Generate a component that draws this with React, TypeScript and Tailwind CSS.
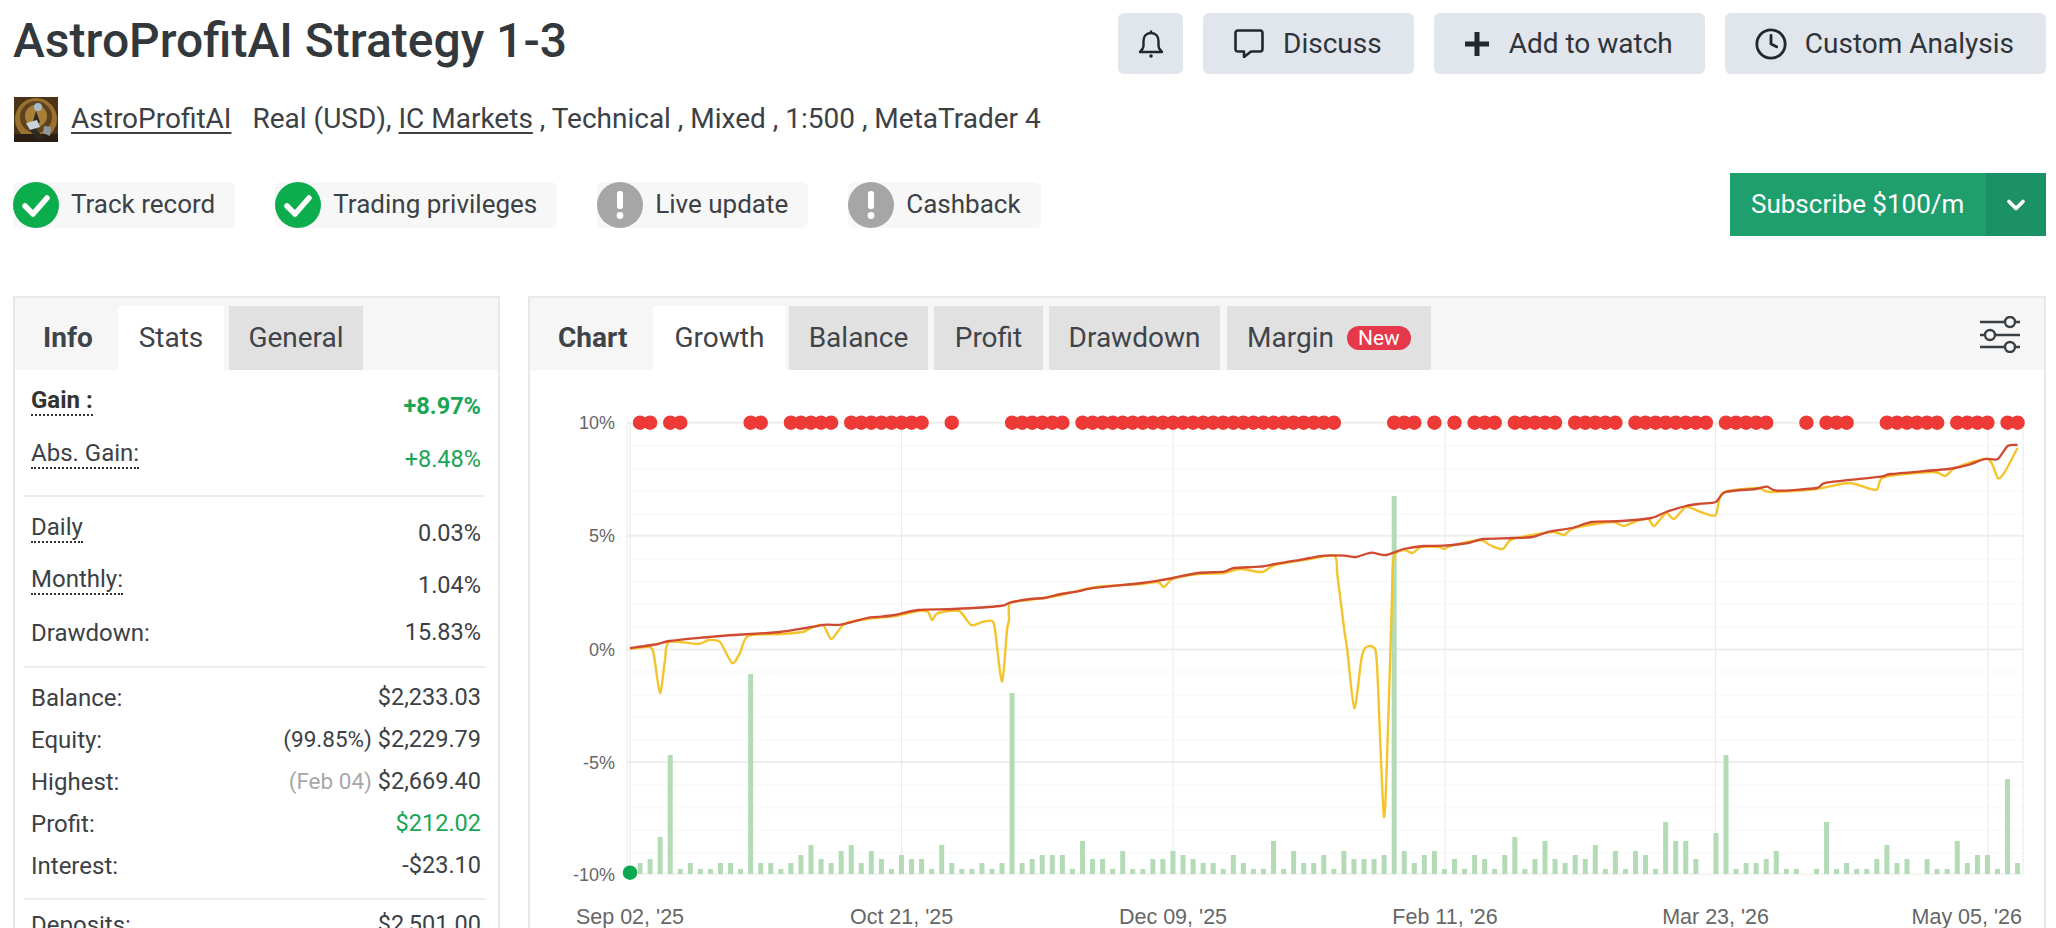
import React from "react";
import { Clock, ChevronDown } from "lucide-react";

type Pt = [number, number];

// catmull-rom through the points, the lines on the chart are smoothed
function smooth(pts: Pt[]) {
  let d = `M${pts[0][0]} ${pts[0][1]}`;
  for (let i = 0; i < pts.length - 1; i++) {
    const p0 = pts[Math.max(i - 1, 0)];
    const p1 = pts[i];
    const p2 = pts[i + 1];
    const p3 = pts[Math.min(i + 2, pts.length - 1)];
    const c1x = p1[0] + (p2[0] - p0[0]) / 8;
    const c1y = p1[1] + (p2[1] - p0[1]) / 8;
    const c2x = p2[0] - (p3[0] - p1[0]) / 8;
    const c2y = p2[1] - (p3[1] - p1[1]) / 8;
    d += ` C${c1x.toFixed(1)} ${c1y.toFixed(1)} ${c2x.toFixed(1)} ${c2y.toFixed(1)} ${p2[0]} ${p2[1]}`;
  }
  return d;
}

const slotX = (i: number) => 630 + i * 10.055;
const BASE = 874;
const RIGHT = 2023;

// bar heights by slot
const bars = [
  0, 11, 15, 37, 119, 5, 11, 5, 5, 11, 11, 5, 200, 11, 11, 5, 11, 19, 29, 15, 11, 23, 29, 11, 23, 15, 5, 19, 15, 15,
  5, 29, 11, 5, 5, 11, 5, 11, 181, 11, 15, 19, 19, 19, 5, 33, 15, 15, 5, 23, 5, 5, 15, 15, 23, 19, 15, 11, 11, 5, 19,
  11, 5, 5, 33, 5, 23, 11, 11, 19, 5, 23, 15, 15, 15, 19, 378, 23, 11, 19, 23, 5, 15, 5, 19, 15, 5, 19, 37, 5, 15, 33,
  15, 11, 19, 15, 29, 5, 23, 5, 23, 19, 5, 52, 33, 33, 15, 0, 41, 119, 5, 11, 11, 15, 23, 5, 5, 0, 5, 52, 5, 11, 5, 5,
  15, 29, 11, 15, 0, 15, 5, 5, 33, 11, 19, 19, 5, 95, 11,
];

const dotRuns: [number, number][] = [
  [1, 2], [4, 5], [12, 13], [16, 20], [22, 29], [32, 32], [38, 43], [45, 70], [76, 78], [80, 80], [82, 82], [84, 86],
  [88, 92], [94, 98], [100, 107], [109, 113], [117, 117], [119, 121], [125, 130], [132, 135], [137, 138],
];
const dots: number[] = [];
dotRuns.forEach(([a, b]) => {
  for (let i = a; i <= b; i++) dots.push(i);
});

// the right half was read off a crop with a slightly different scale
const fixX = (pts: Pt[]): Pt[] =>
  pts.map(([x, y]) => [x > 1280 ? +(1280 + (x - 1280) * 0.99).toFixed(1) : x, y] as Pt);

const redLine: Pt[] = fixX([
  [630, 648], [658, 644], [669, 641], [709, 637], [734, 635], [780, 632], [806, 628], [826, 624.7], [841, 624.7],
  [867, 618], [877, 617], [895, 615], [918, 610], [954, 609], [1000, 606], [1010, 602.7], [1030, 599], [1045, 598],
  [1061, 594], [1076, 591.7], [1096, 587.7], [1142, 583], [1158, 580.7], [1173, 578], [1198, 573], [1224, 571.7],
  [1234, 568], [1260, 566.7], [1275, 564], [1295, 560.7], [1310, 558], [1325, 555.7], [1345, 555.7], [1357, 557],
  [1372, 552.7], [1387, 555], [1405, 549], [1425, 546], [1445, 545.7], [1470, 543], [1485, 539], [1515, 538],
  [1535, 537], [1552, 531.7], [1575, 528], [1595, 522], [1625, 521], [1655, 518], [1670, 512], [1690, 506],
  [1705, 503.7], [1720, 502], [1730, 492], [1760, 489], [1772, 486.7], [1782, 490.7], [1822, 488], [1832, 482.7],
  [1887, 476.7], [1897, 474], [1955, 469], [1975, 465], [1992, 459], [2005, 459], [2015, 446], [2025, 445],
]);

const yellowLine: Pt[] = fixX([
  [630, 649], [650, 647], [654, 656], [660, 693], [665, 660], [669, 642], [698, 644], [709, 640], [720, 642],
  [732, 663], [740, 653], [748, 636], [780, 634], [803, 632], [811, 628], [823, 625], [831, 639], [839, 630], [846, 623],
  [867, 619], [895, 616], [918, 611], [928, 612], [932, 620], [938, 613], [959, 611], [971, 625], [982, 622], [992, 621],
  [995, 630], [1002, 682], [1007, 630], [1009, 620], [1010, 603], [1030, 600], [1061, 595], [1096, 587], [1142, 584],
  [1158, 582], [1164, 587], [1173, 579], [1198, 574], [1224, 573], [1240, 569], [1262, 572], [1275, 565], [1310, 559],
  [1335, 556], [1338, 575], [1345, 630], [1348, 650], [1355, 708], [1362, 660], [1366, 648], [1374, 647], [1378, 665],
  [1385, 817], [1390, 700], [1393, 600], [1395, 557],
  [1405, 550], [1414, 553], [1422, 547], [1440, 547], [1446, 549], [1452, 546], [1482, 540], [1492, 545], [1505, 549],
  [1515, 539], [1555, 532], [1567, 535], [1577, 528], [1615, 522], [1627, 526], [1640, 521], [1652, 519], [1658, 526],
  [1670, 513], [1678, 519], [1690, 507], [1705, 512], [1720, 515], [1727, 493], [1762, 488], [1770, 491], [1780, 492],
  [1822, 489], [1855, 483], [1882, 490], [1890, 477], [1940, 472], [1952, 476], [1962, 468], [1995, 459], [2005, 478],
  [2012, 472], [2025, 448],
]);

function Chart() {
  const hLines = [-10, -9, -8, -7, -6, -4, -3, -2, -1, 1, 2, 3, 4, 6, 7, 8, 9];
  return (
    <svg viewBox="530 370 1514 558" className="block w-[1514px] h-[558px]">
      {hLines.map((n) => {
        const y = 649.5 - n * 22.6;
        return <line key={n} x1={627} x2={RIGHT} y1={y} y2={y} stroke="#fafafa" strokeWidth={1.5} />;
      })}
      {[422.7, 535.7, 649.5, 762].map((y) => (
        <line key={y} x1={627} x2={RIGHT} y1={y} y2={y} stroke="#eeeeee" strokeWidth={2} />
      ))}
      {[627, 630, 901.6, 1173, 1445, 1715.6, 1988, RIGHT].map((x) => (
        <line key={x} x1={x} x2={x} y1={423} y2={874} stroke="#e8e8e8" strokeWidth={1} />
      ))}
      <line x1={627} x2={RIGHT} y1={874} y2={874} stroke="#eeeeee" strokeWidth={1} />
      {bars.map((h, i) =>
        h ? <rect key={i} x={slotX(i) - 2.5} y={BASE - h} width={5} height={h} fill="#b2dbb6" /> : null
      )}
      <path d={smooth(yellowLine)} fill="none" stroke="#f3c42c" strokeWidth={2.4} strokeLinejoin="round" />
      <path d={smooth(redLine)} fill="none" stroke="#d04a30" strokeWidth={2.3} strokeLinejoin="round" />
      {dots.map((i) => (
        <circle key={i} cx={slotX(i)} cy={422.7} r={7.2} fill="#ee3a36" />
      ))}
      <circle cx={630} cy={872.7} r={7.2} fill="#0aa84f" />
      {[
        ["10%", 429],
        ["5%", 542],
        ["0%", 656],
        ["-5%", 769],
        ["-10%", 881],
      ].map(([t, y]) => (
        <text key={t} x={615} y={y} textAnchor="end" fontSize={18} fill="#666" fontFamily="'Liberation Sans', sans-serif">
          {t}
        </text>
      ))}
      {[
        ["Sep 02, '25", 630],
        ["Oct 21, '25", 901.6],
        ["Dec 09, '25", 1173],
        ["Feb 11, '26", 1445],
        ["Mar 23, '26", 1715.6],
      ].map(([t, x]) => (
        <text key={t} x={x} y={924} textAnchor="middle" fontSize={21.5} fill="#666" fontFamily="'Liberation Sans', sans-serif">
          {t}
        </text>
      ))}
      <text x={2022} y={924} textAnchor="end" fontSize={21.5} fill="#666" fontFamily="'Liberation Sans', sans-serif">
        May 05, '26
      </text>
    </svg>
  );
}

function Avatar() {
  return (
    <svg viewBox="0 0 44 45" className="w-[44px] h-[45px] shrink-0">
      <rect width="44" height="45" fill="#4c3318" />
      <circle cx="22" cy="22" r="21" fill="#9a7230" />
      <circle cx="22" cy="20" r="16" fill="#5f4320" />
      <circle cx="22" cy="19" r="11" fill="#a97f38" />
      <rect y="37" width="44" height="8" fill="#2b1e14" />
      <circle cx="24" cy="10" r="4" fill="#a9bccb" />
      <path d="M22 14 L26 25 L20 30 L30 41 L24 42 L15 33 L19 24 Z" fill="#2d2a26" />
      <path d="M12 26 L23 23 L26 30 L16 33 Z" fill="#c9d3d8" />
      <path d="M30 29 L37 30 L36 39 L29 36 Z" fill="#8f9aa0" />
    </svg>
  );
}

function Badge({ ok, label }: { ok: boolean; label: string }) {
  return (
    <div className="flex items-center h-[46px] bg-[#f7f7f7] rounded-md pr-[20px]">
      {ok ? (
        <svg viewBox="0 0 46 46" className="w-[46px] h-[46px] mr-[12px]">
          <circle cx="23" cy="23" r="23" fill="#0bad4c" />
          <path d="M12 24 L20 32 L34 16" fill="none" stroke="#fff" strokeWidth="5.5" strokeLinecap="round" strokeLinejoin="round" />
        </svg>
      ) : (
        <svg viewBox="0 0 46 46" className="w-[46px] h-[46px] mr-[12px]">
          <circle cx="23" cy="23" r="23" fill="#a6a6a6" />
          <rect x="20" y="9" width="6" height="18" rx="2.5" fill="#fff" />
          <circle cx="23" cy="33.5" r="3.4" fill="#fff" />
        </svg>
      )}
      <span className="text-[26px] text-[#3c4146]">{label}</span>
    </div>
  );
}

function ActionButton({ children }: { children: React.ReactNode }) {
  return (
    <button className="flex items-center h-[61px] bg-[#e1e5ec] rounded-md pl-[31px] pr-[32px] text-[28px] text-[#2f343a]">
      {children}
    </button>
  );
}

function TabHead({ children }: { children: React.ReactNode }) {
  return <div className="flex items-end h-[72px] bg-[#f6f6f6]">{children}</div>;
}

function Tab({ label, active, className }: { label: React.ReactNode; active?: boolean; className: string }) {
  return (
    <div
      className={`flex items-center h-[64px] text-[28px] text-[#3f444a] ${active ? "bg-white" : "bg-[#e1e1e1]"} ${className}`}
    >
      {label}
    </div>
  );
}

function Row({ h, label, value, tip, bold, green }: {
  h: string;
  label: string;
  value: React.ReactNode;
  tip?: boolean;
  bold?: boolean;
  green?: boolean;
}) {
  return (
    <div className={`flex items-center justify-between ${h}`}>
      {tip ? (
        <span className={`text-[24px] leading-[28px] mb-[12px] border-b-2 border-dotted border-[#333] ${bold ? "font-bold text-[#333]" : ""}`}>
          {label}
        </span>
      ) : (
        <span className="text-[24px]">{label}</span>
      )}
      <span className={`${green ? "text-[#1ba556]" : ""} ${bold ? "font-bold" : ""}`}>{value}</span>
    </div>
  );
}

export default function App() {
  return (
    <div className="h-[928px] overflow-hidden bg-white pl-[13px] pr-[10px] pt-[13px] font-['Roboto',sans-serif] text-[#3c4146]">
      <div className="flex items-start justify-between h-[61px]">
        <h1 className="text-[48px] leading-[56px] font-medium text-[#33383d]">AstroProfitAI Strategy 1-3</h1>
        <div className="flex gap-[20px]">
          <button className="flex items-center justify-center w-[65px] h-[61px] bg-[#e1e5ec] rounded-md">
            <svg viewBox="0 0 26 29" className="w-[26px] h-[29px]" fill="none" stroke="#23282d" strokeWidth="2.4" strokeLinejoin="round">
              <path d="M13 1.5 V4 M13 4 C8 4 5.5 7.5 5.5 12 V17 C5.5 19.5 3.5 21 2 23 H24 C22.5 21 20.5 19.5 20.5 17 V12 C20.5 7.5 18 4 13 4 Z" />
              <circle cx="13" cy="27" r="1.8" fill="#23282d" stroke="none" />
            </svg>
          </button>
          <ActionButton>
            <svg viewBox="0 0 30 29" className="w-[30px] h-[29px] mr-[19px]">
              <path d="M4 1.5 H26 Q28.5 1.5 28.5 4 V20 Q28.5 22.5 26 22.5 H17 L10 28 V22.5 H4 Q1.5 22.5 1.5 20 V4 Q1.5 1.5 4 1.5 Z" fill="none" stroke="#23282d" strokeWidth="2.6" strokeLinejoin="round" />
            </svg>
            Discuss
          </ActionButton>
          <ActionButton>
            <svg viewBox="0 0 24 24" className="w-[24px] h-[24px] mr-[20px]">
              <path d="M12 0 V24 M0 12 H24" stroke="#23282d" strokeWidth="5" />
            </svg>
            Add to watch
          </ActionButton>
          <ActionButton>
            <Clock size={34} strokeWidth={2} className="mr-[17px] -ml-[2px] text-[#23282d]" />
            Custom Analysis
          </ActionButton>
        </div>
      </div>

      <div className="flex items-center h-[45px] mt-[23px] pl-[1px] text-[28px]">
        <Avatar />
        <a className="underline underline-offset-4 ml-[13px] mb-[2px]">AstroProfitAI</a>
        <span className="ml-[21px] mb-[2px]">Real (USD),&nbsp;</span>
        <a className="underline underline-offset-4 mb-[2px]">IC Markets</a>
        <span className="mb-[2px]">&nbsp;, Technical , Mixed , 1:500 , MetaTrader 4</span>
      </div>

      <div className="flex items-center justify-between h-[63px] mt-[31px]">
        <div className="flex gap-[40px]">
          <Badge ok label="Track record" />
          <Badge ok label="Trading privileges" />
          <Badge ok={false} label="Live update" />
          <Badge ok={false} label="Cashback" />
        </div>
        <div className="flex h-[63px] w-[316px] text-white bg-[#1f9e6e]">
          <div className="flex-1 flex items-center pl-[21px] text-[26px]">Subscribe $100/m</div>
          <div className="w-[60px] flex items-center justify-center bg-[#1b9165]">
            <ChevronDown size={28} strokeWidth={3.2} />
          </div>
        </div>
      </div>

      <div className="flex items-start gap-[28px] mt-[60px]">
        <aside className="w-[487px] shrink-0 h-[640px] border-2 border-[#e8e8e8]">
          <TabHead>
            <div className="flex items-center w-[103px] h-[64px] pl-[28px] text-[28px] font-bold text-[#3f444a]">Info</div>
            <Tab active label="Stats" className="w-[106px] justify-center" />
            <Tab label="General" className="w-[134px] ml-[5px] justify-center" />
          </TabHead>
          <div className="pl-[9px] pr-[13px] text-[23.5px] text-[#3c4146]">
            <div className="pl-[7px] pr-[4px] pt-[10px] pb-[9px]">
              <Row h="h-[53px]" label="Gain :" value="+8.97%" tip bold green />
              <Row h="h-[53px]" label="Abs. Gain:" value="+8.48%" tip green />
            </div>
            <div className="border-t-2 border-[#eeeeee] pl-[7px] pr-[4px] pt-[11px] pb-[12px]">
              <Row h="h-[52px]" label="Daily" value="0.03%" tip />
              <Row h="h-[52px]" label="Monthly:" value="1.04%" tip />
              <Row h="h-[42px]" label="Drawdown:" value="15.83%" />
            </div>
            <div className="border-t-2 border-[#eeeeee] pl-[7px] pr-[4px] pt-[9px] pb-[11px]">
              <Row h="h-[42px]" label="Balance:" value="$2,233.03" />
              <Row
                h="h-[42px]"
                label="Equity:"
                value={
                  <>
                    <span className="text-[22.5px]">(99.85%)</span> $2,229.79
                  </>
                }
              />
              <Row
                h="h-[42px]"
                label="Highest:"
                value={
                  <>
                    <span className="text-[22.5px] text-[#a8a8a8]">(Feb 04)</span> $2,669.40
                  </>
                }
              />
              <Row h="h-[42px]" label="Profit:" value="$212.02" green />
              <Row h="h-[42px]" label="Interest:" value="-$23.10" />
            </div>
            <div className="border-t-2 border-[#eeeeee] pl-[7px] pr-[4px] pt-[4px]">
              <Row h="h-[42px]" label="Deposits:" value="$2,501.00" />
            </div>
          </div>
        </aside>

        <main className="flex-1 h-[640px] border-2 border-[#e8e8e8]">
          <TabHead>
            <div className="flex items-center w-[123px] h-[64px] pl-[28px] text-[28px] font-bold text-[#3f444a]">Chart</div>
            <Tab active label="Growth" className="w-[133px] justify-center" />
            <Tab label="Balance" className="w-[139px] ml-[3px] justify-center" />
            <Tab label="Profit" className="w-[109px] ml-[6px] justify-center" />
            <Tab label="Drawdown" className="w-[171px] ml-[6px] justify-center" />
            <Tab
              label={
                <>
                  Margin
                  <span className="ml-[13px] flex items-center h-[24px] px-[11px] rounded-full bg-[#e5384a] text-white text-[21px] leading-none">
                    New
                  </span>
                </>
              }
              className="w-[204px] ml-[7px] pl-[20px]"
            />
            <svg viewBox="0 0 40 37" className="w-[40px] h-[37px] ml-auto mr-[24px] mb-[17px]" fill="none" stroke="#3a3f44" strokeWidth="2.4">
              <path d="M0 6 H25 M35 6 H40 M0 19 H5 M15 19 H40 M0 31 H25 M35 31 H40" />
              <circle cx="30" cy="6" r="5" />
              <circle cx="10" cy="19" r="5" />
              <circle cx="30" cy="31" r="5" />
            </svg>
          </TabHead>
          <Chart />
        </main>
      </div>
    </div>
  );
}
